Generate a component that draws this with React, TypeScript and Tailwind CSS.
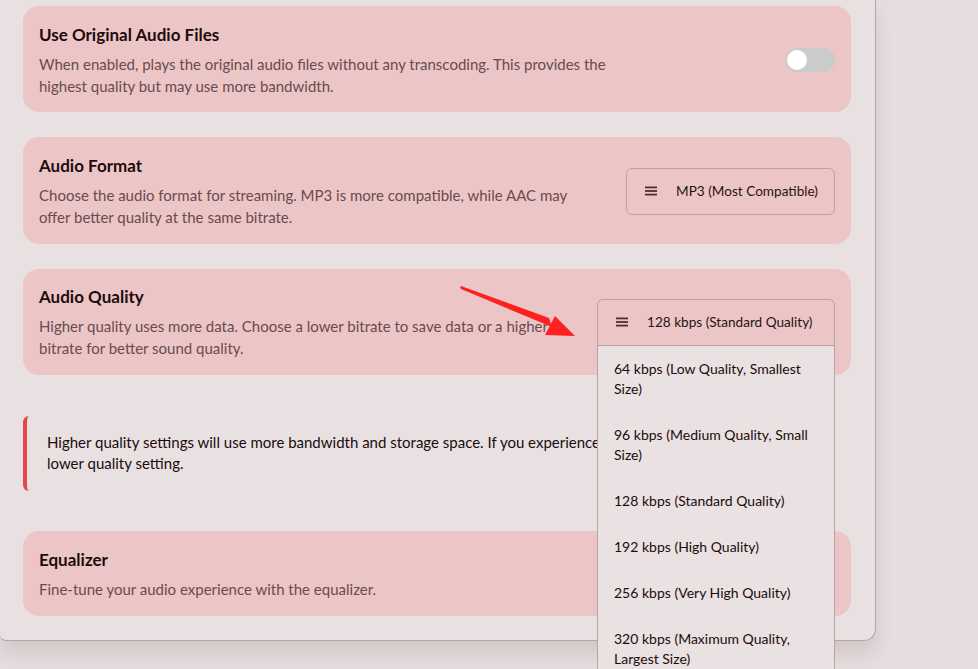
import React from "react";

const qualityOptions = [
  "64 kbps (Low Quality, Smallest Size)",
  "96 kbps (Medium Quality, Small Size)",
  "128 kbps (Standard Quality)",
  "192 kbps (High Quality)",
  "256 kbps (Very High Quality)",
  "320 kbps (Maximum Quality, Largest Size)",
];

function MenuIcon() {
  return (
    <svg width="14" height="12" viewBox="0 0 14 12" className="shrink-0 text-[#4e3034]">
      <rect x="1" y="1.5" width="12" height="1.8" fill="currentColor" />
      <rect x="1" y="5.1" width="12" height="1.8" fill="currentColor" />
      <rect x="1" y="8.7" width="12" height="1.8" fill="currentColor" />
    </svg>
  );
}

function SettingText({ title, desc }: { title: string; desc: string }) {
  return (
    <div className="flex-1 max-w-[576px]">
      <h3 className="text-[17px] leading-6 font-bold text-[#1e0b0c]">{title}</h3>
      <p className="mt-[6px] text-[15px] leading-[22px] text-[#6a4b4e]">{desc}</p>
    </div>
  );
}

export default function App() {
  return (
    <div
      className="relative h-[669px] w-full overflow-hidden bg-[#e6dddf]"
      style={{ fontFamily: "Lato, 'Noto Sans', sans-serif" }}
    >
      <div className="w-[876px] bg-[#e9e0e1] border-r border-b border-[#b6a4a7] rounded-br-xl rounded-bl-md px-[23px] pr-6 pt-[6px] pb-6 shadow-[0_12px_18px_rgba(120,100,100,0.18)]">
        <div className="flex flex-col gap-[25px]">
          {/* original files */}
          <div className="flex items-center gap-8 rounded-2xl bg-[#ecc6c6] px-4 pt-[17px] pb-[15px]">
            <SettingText
              title="Use Original Audio Files"
              desc="When enabled, plays the original audio files without any transcoding. This provides the highest quality but may use more bandwidth."
            />
            <div className="ml-auto h-6 w-[50px] rounded-full bg-[#cbcbcb] p-[2px]">
              <div className="h-5 w-5 rounded-full bg-white" />
            </div>
          </div>

          {/* format */}
          <div className="flex items-center gap-8 rounded-2xl bg-[#ecc6c6] px-4 pt-[17px] pb-4">
            <SettingText
              title="Audio Format"
              desc="Choose the audio format for streaming. MP3 is more compatible, while AAC may offer better quality at the same bitrate."
            />
            <button className="ml-auto flex h-[47px] items-center gap-[18px] whitespace-nowrap rounded-md border border-[#b9a3a5] pl-[17px] pr-4 text-left text-[13.6px] text-[#2a1214]">
              <MenuIcon />
              MP3 (Most Compatible)
            </button>
          </div>

          {/* quality */}
          <div className="flex items-center gap-8 rounded-2xl bg-[#ecc6c6] px-4 pt-4 pb-4">
            <SettingText
              title="Audio Quality"
              desc="Higher quality uses more data. Choose a lower bitrate to save data or a higher bitrate for better sound quality."
            />
            <div className="relative ml-auto w-[238px] shrink-0">
              <button className="flex h-[47px] w-full items-center gap-[18px] whitespace-nowrap rounded-t-md border border-[#b9a3a5] px-[17px] text-left text-[13.6px] text-[#2a1214]">
                <MenuIcon />
                128 kbps (Standard Quality)
              </button>
              <ul className="absolute left-0 top-[46px] z-10 w-full border border-[#b9a3a5] bg-[#e9e1e2]">
                {qualityOptions.map((opt) => (
                  <li key={opt} className="px-4 py-[13px] text-[14px] leading-5 text-[#1e0b0c]">
                    {opt}
                  </li>
                ))}
              </ul>
            </div>
          </div>
        </div>

        {/* notice */}
        <div className="mt-[41px] rounded-l-md border-l-4 border-[#e24848] pl-5 pr-5 pt-4 pb-[17px] text-[15px] leading-[21px] text-[#1a0c0e]">
          Higher quality settings will use more bandwidth and storage space. If you experience buffering or playback issues, try a lower quality setting.
        </div>

        {/* equalizer */}
        <div className="mt-10 flex items-center gap-8 rounded-2xl bg-[#ecc6c6] px-4 pt-[17px] pb-4">
          <SettingText title="Equalizer" desc="Fine-tune your audio experience with the equalizer." />
        </div>
      </div>

      {/* annotation arrow */}
      <svg className="pointer-events-none absolute left-0 top-0 z-20" width="978" height="669">
        <polygon points="460,287 461,289 552,327 549,318 461,286" fill="#ff2020" />
        <polygon points="555,316 575,336 545,335" fill="#ff2020" />
      </svg>
    </div>
  );
}
